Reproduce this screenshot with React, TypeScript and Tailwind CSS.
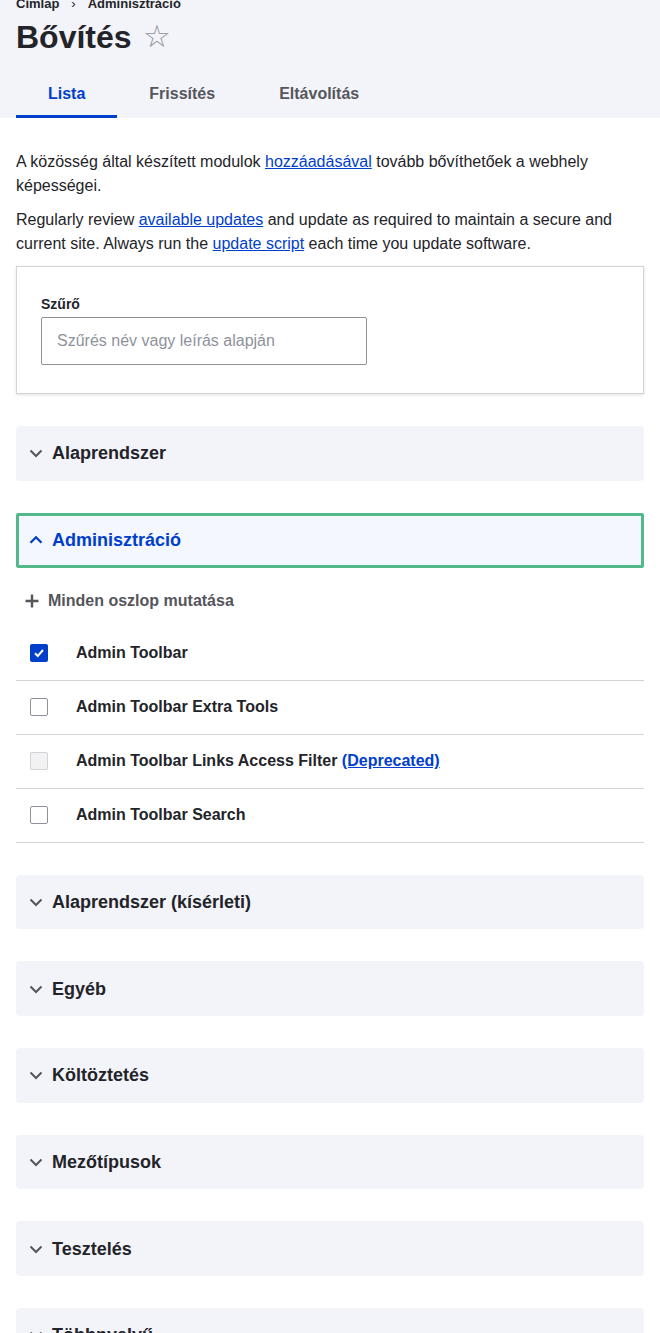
import React from "react";

const Chevron = ({ up = false, color = "#55565b" }: { up?: boolean; color?: string }) => (
  <svg width="14" height="14" viewBox="0 0 14 14" className="shrink-0">
    {up ? (
      <path d="M1.5 9.8 L7 4.3 L12.5 9.8" fill="none" stroke={color} strokeWidth="2.3" />
    ) : (
      <path d="M1.5 4.5 L7 10 L12.5 4.5" fill="none" stroke={color} strokeWidth="2" />
    )}
  </svg>
);

const Section = ({ title }: { title: string }) => (
  <div className="h-[54.7px] shrink-0 rounded bg-[#f3f4f9] flex items-center pl-[13px] gap-[9px]">
    <Chevron />
    <span className="text-[18px] font-bold text-[#232429] leading-[24px]">{title}</span>
  </div>
);

const Row = ({ label, state, deprecated }: { label: string; state: "checked" | "empty" | "disabled"; deprecated?: boolean }) => (
  <div className="h-[54px] border-b border-[#d3d4d9] flex items-center">
    <div className="w-[60px] pl-[14px] flex items-center">
      {state === "checked" ? (
        <div className="w-[18px] h-[18px] rounded-[2px] bg-[#003ecc] flex items-center justify-center">
          <svg width="12" height="12" viewBox="0 0 12 12">
            <path d="M2 6.2 L4.8 9 L10 3" fill="none" stroke="#fff" strokeWidth="2" />
          </svg>
        </div>
      ) : state === "disabled" ? (
        <div className="w-[18px] h-[18px] rounded-[2px] bg-[#f2f2f3] border border-[#d3d4d9]" />
      ) : (
        <div className="w-[18px] h-[18px] rounded-[2px] bg-white border border-[#8e929c]" />
      )}
    </div>
    <span className="text-[16px] font-bold text-[#232429] leading-[24px]">
      {label}
      {deprecated && (
        <>
          {" "}
          <a className="text-[#003ecc] underline">(Deprecated)</a>
        </>
      )}
    </span>
  </div>
);

export default function App() {
  return (
    <div className="min-h-screen bg-white text-[#232429]" style={{ fontFamily: '"Liberation Sans", Arial, sans-serif' }}>
      <div className="bg-[#f3f4f9] px-4 overflow-hidden">
        <div className="-mt-[4px] flex items-center text-[13px] font-bold leading-[16px] text-[#232429]">
          <span>Címlap</span>
          <span className="ml-[12px] mr-[12px] font-normal">›</span>
          <span>Adminisztráció</span>
        </div>
        <div className="flex items-center mt-[5px] h-[40px]">
          <h1 className="text-[32px] font-bold leading-[40px]">Bővítés</h1>
          <span className="ml-[11px] text-[31px] leading-[40px] text-[#8e929c]">☆</span>
        </div>
        <div className="flex mt-[13px] h-[48px]">
          <div className="relative px-8 flex items-center text-[16px] font-bold text-[#003ecc]">
            Lista
            <div className="absolute left-0 right-0 bottom-0 h-[3px] bg-[#003ecc]" />
          </div>
          <div className="px-8 flex items-center text-[16px] font-bold text-[#55565b]">Frissítés</div>
          <div className="px-8 flex items-center text-[16px] font-bold text-[#55565b]">Eltávolítás</div>
        </div>
      </div>

      <div className="px-4 pt-[32px]">
        <p className="text-[16px] leading-[24px] text-[#232429]">
          A közösség által készített modulok <a className="text-[#003ecc] underline">hozzáadásával</a> tovább bővíthetőek a webhely képességei.
        </p>
        <p className="mt-[10px] text-[16px] leading-[24px] text-[#232429]">
          Regularly review <a className="text-[#003ecc] underline">available updates</a> and update as required to maintain a secure and current site. Always run the <a className="text-[#003ecc] underline">update script</a> each time you update software.
        </p>

        <div className="mt-[10px] border border-[#d3d4d9] shadow-[0_1px_3px_rgba(0,0,0,0.12)] px-6 py-[28px]">
          <div className="text-[14px] font-bold leading-[18px] text-[#232429]">Szűrő</div>
          <div className="mt-[4px] w-[326px] h-[48px] border border-[#919297] rounded-[2px] flex items-center pl-[15px] text-[16px] text-[#8e929c]">
            Szűrés név vagy leírás alapján
          </div>
        </div>

        <div className="mt-[32px] flex flex-col gap-8">
          <Section title="Alaprendszer" />

          <div>
            <div className="h-[55px] rounded-[2px] border-[3px] border-[#53b88a] bg-[#f4f7fe] flex items-center pl-[10px] gap-[9px]">
              <Chevron up color="#003ecc" />
              <span className="text-[18px] font-bold text-[#003ecc] leading-[24px]">Adminisztráció</span>
            </div>
            <div className="mt-[21px] flex items-center h-[24px] pl-[9px] gap-[9px]">
              <svg width="14" height="14" viewBox="0 0 14 14">
                <path d="M7 0.5 V13.5 M0.5 7 H13.5" stroke="#55565b" strokeWidth="2.4" />
              </svg>
              <span className="text-[16px] font-bold text-[#55565b]">Minden oszlop mutatása</span>
            </div>
            <div className="mt-[14px]">
              <Row label="Admin Toolbar" state="checked" />
              <Row label="Admin Toolbar Extra Tools" state="empty" />
              <Row label="Admin Toolbar Links Access Filter" state="disabled" deprecated />
              <Row label="Admin Toolbar Search" state="empty" />
            </div>
          </div>

          <Section title="Alaprendszer (kísérleti)" />
          <Section title="Egyéb" />
          <Section title="Költöztetés" />
          <Section title="Mezőtípusok" />
          <Section title="Tesztelés" />
          <Section title="Többnyelvű" />
        </div>
        <div className="h-[40px]" />
      </div>
    </div>
  );
}
